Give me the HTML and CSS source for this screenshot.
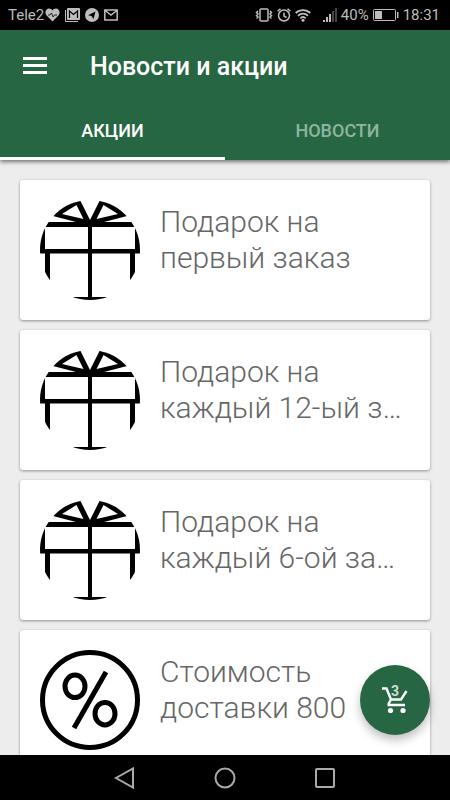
FILE: index.html
```html
<!DOCTYPE html>
<html lang="ru">
<head>
<meta charset="utf-8">
<meta name="viewport" content="width=device-width, initial-scale=1">
<title>Новости и акции</title>
<link rel="stylesheet" href="styles.css">
</head>
<body>
<svg class="defs" aria-hidden="true">
  <defs>
    <clipPath id="round"><circle cx="50" cy="50" r="50"/></clipPath>
    <symbol id="gift" viewBox="0 0 100 100">
      <g clip-path="url(#round)">
        <path fill-rule="evenodd" d="M40 0 50 20 60 0 80 0 87 16 64 22H100V53.500H95V100H90V53.500H52V97H100V100H0V97H48V53.500H10V100H5V53.500H0V22H36L13 16 20 0ZM36.500 5 22 14 43.500 19ZM63.500 5 56.500 19 78 14ZM5 27V49H48V27ZM52 27V49H95V27Z"/>
      </g>
    </symbol>
    <symbol id="percent" viewBox="0 0 100 100">
      <g fill="none" stroke="#000" stroke-width="5">
        <circle cx="50" cy="50" r="47.5"/>
        <ellipse cx="35" cy="36.3" rx="10" ry="11.3"/>
        <ellipse cx="65" cy="63.7" rx="10" ry="11.3"/>
        <path d="M66 22 34 78"/>
      </g>
    </symbol>
  </defs>
</svg>

<div class="status">
  <div class="status-group left">
    <span class="carrier">Tele2</span>
    <svg width="15" height="14" viewBox="0 0 15 14"><path fill="#bdbdbd" d="M7.500 13.500 1.600 7.400C-1 4.500 1 .5 4 .5c1.500 0 2.700.7 3.500 1.900C8.300 1.200 9.500.5 11 .5c3 0 5 4 2.400 6.900z"/><path fill="none" stroke="#000" stroke-width=".8" d="M3 7h2l1.500-2 1.500 4 1.500-2H12"/></svg>
    <svg width="15" height="14" viewBox="0 0 15 14"><path fill="none" stroke="#bdbdbd" d="M.5 2v11.500H13"/><rect x="2" width="13" height="12" rx="1" fill="#bdbdbd"/><path fill="none" stroke="#000" stroke-width="1.200" d="M4.500 10V3l4 3.500 4-3.500v7"/></svg>
    <svg width="14" height="14" viewBox="0 0 14 14"><circle cx="7" cy="7" r="7" fill="#bdbdbd"/><path d="M3 7.200 10.500 3.500 8.500 11 6.500 8z"/></svg>
    <svg width="14" height="12" viewBox="0 0 14 12"><path fill="none" stroke="#bdbdbd" stroke-width="1.500" d="M.8 1h12.400v10H.8zM1 1.500l6 4.500 6-4.500"/></svg>
  </div>
  <div class="status-group">
    <svg width="18" height="14" viewBox="0 0 18 14"><g fill="none" stroke="#bdbdbd" stroke-width="1.500"><rect x="5" y="1" width="8" height="12" rx="1"/><path d="M3 3 1.500 4.500 3 6 1.500 7.500 3 9 1.500 10.500M15 3l1.500 1.500L15 6l1.500 1.500L15 9l1.500 1.500"/></g></svg>
    <svg width="14" height="14" viewBox="0 0 14 14"><g fill="none" stroke="#bdbdbd" stroke-width="1.500"><circle cx="7" cy="7.500" r="5.500"/><path d="M7 4.500v3.500l2.500 1.500M.6 3.200 3.500.7M13.400 3.200 10.500.7"/></g></svg>
    <svg width="16" height="14" viewBox="0 0 16 14"><g fill="none" stroke="#bdbdbd" stroke-width="1.800"><path d="M.7 5a10.500 10.500 0 0 1 14.600 0M3 7.800a7 7 0 0 1 10 0M5.300 10.300a4 4 0 0 1 5.400 0"/></g><circle cx="8" cy="12.300" r="1.500" fill="#bdbdbd"/></svg>
    <svg class="signal" width="14" height="14" viewBox="0 0 14 14"><path fill="#bdbdbd" d="M0 12h2v2H0zM3 9h2v5H3zM6 6h2v8H6z"/><path fill="#444" d="M9 3h2v11H9zM12 0h2v14h-2z"/></svg>
    <span>40%</span>
    <svg width="26" height="12" viewBox="0 0 26 12"><rect x=".5" y=".5" width="22" height="11" rx="1" fill="none" stroke="#bdbdbd"/><path fill="#bdbdbd" d="M2 2h7v8H2zM24 3h1.500v6H24z"/></svg>
    <time>18:31</time>
  </div>
</div>

<header class="appbar">
  <div class="toolbar">
    <button class="menu" type="button" aria-label="Меню"><svg width="24" height="17" viewBox="0 0 24 17"><path fill="#fff" d="M0 0h24v3H0zM0 7h24v3H0zM0 14h24v3H0z"/></svg></button>
    <h1>Новости и акции</h1>
  </div>
  <nav class="tabs">
    <a class="tab active" href="#promo">АКЦИИ</a>
    <a class="tab" href="#news">НОВОСТИ</a>
  </nav>
</header>

<main class="content">
  <div class="list" id="promo">
    <article class="card"><svg class="pic"><use href="#gift"/></svg><h2>Подарок на<br>первый заказ</h2></article>
    <article class="card"><svg class="pic"><use href="#gift"/></svg><h2>Подарок на<br>каждый 12-ый з…</h2></article>
    <article class="card"><svg class="pic"><use href="#gift"/></svg><h2>Подарок на<br>каждый 6-ой за…</h2></article>
    <article class="card"><svg class="pic"><use href="#percent"/></svg><h2>Стоимость<br>доставки 800</h2></article>
  </div>
  <button class="fab" type="button" aria-label="Корзина">
    <svg width="28" height="28" viewBox="0 0 28 28"><g fill="none" stroke="#fff" stroke-width="2.400"><path d="M1 2.500h4.500L10 13.500h10L25.500 5M10 13.500l-2.300 4V19H24"/></g><circle cx="9.500" cy="24.500" r="2.600" fill="#fff"/><circle cx="22" cy="24.500" r="2.600" fill="#fff"/></svg>
    <span class="count">3</span>
  </button>
</main>

<footer class="sysnav">
  <button type="button" aria-label="Назад"><svg width="22" height="22" viewBox="0 0 22 22"><path d="M19 1.500v19L2 11z"/></svg></button>
  <button type="button" aria-label="Домой"><svg width="22" height="22" viewBox="0 0 22 22"><circle cx="11" cy="11" r="9.500"/></svg></button>
  <button type="button" aria-label="Недавние"><svg width="22" height="22" viewBox="0 0 22 22"><rect x="2" y="2" width="18" height="18" rx="1"/></svg></button>
</footer>
</body>
</html>
```
FILE: styles.css
```css
* { box-sizing: border-box; }

body {
  margin: 0;
  height: 100vh;
  display: flex;
  flex-direction: column;
  background: #ededed;
  font-family: Roboto, "Liberation Sans", sans-serif;
}

button {
  padding: 0;
  border: 0;
  background: none;
  font: inherit;
  cursor: pointer;
}

svg { display: block; flex: none; }

.defs { position: absolute; width: 0; height: 0; }

.status {
  flex: none;
  height: 30px;
  padding: 0 10px 0 8px;
  display: flex;
  align-items: center;
  justify-content: space-between;
  background: #000;
  color: #bdbdbd;
  font-size: 15px;
}

.status-group { display: flex; align-items: center; gap: 4px; }
.status-group.left { gap: 5px; }
.carrier { margin-right: -4px; }
.signal { margin-left: 8px; }

.appbar {
  flex: none;
  position: relative;
  z-index: 1;
  background: #266643;
  color: #fff;
  box-shadow: 0 2px 4px rgba(0, 0, 0, 0.5);
}

.toolbar {
  height: 70px;
  padding: 0 23px;
  display: flex;
  align-items: center;
  gap: 43px;
}

h1 { margin: 2px 0 0; font-size: 25px; font-weight: 500; }

.tabs { display: flex; height: 60px; }

.tab {
  flex: 1;
  display: flex;
  align-items: center;
  justify-content: center;
  border-top: 3px solid transparent;
  border-bottom: 3px solid transparent;
  color: #8fb5a0;
  font-size: 18px;
  font-weight: 500;
  text-decoration: none;
}

.tab.active { color: #fff; border-bottom-color: #fff; }

.content { flex: 1; min-height: 0; position: relative; }

.list {
  height: 100%;
  overflow: hidden;
  padding: 20px 20px 0;
  display: flex;
  flex-direction: column;
  gap: 10px;
}

.card {
  flex: none;
  min-height: 140px;
  padding: 20px;
  display: flex;
  gap: 20px;
  background: #fff;
  border-radius: 3px;
  box-shadow: 0 1px 3px rgba(0, 0, 0, 0.4);
}

.pic { width: 100px; height: 100px; }

h2 {
  margin: 4px 0 0;
  color: #666;
  font-size: 30px;
  font-weight: 300;
  line-height: 36px;
  white-space: nowrap;
}

.fab {
  position: absolute;
  right: 20px;
  bottom: 20px;
  width: 70px;
  height: 70px;
  display: grid;
  place-items: center;
  border-radius: 50%;
  background: #266643;
  box-shadow: 0 5px 10px rgba(0, 0, 0, 0.25);
}

.count {
  position: absolute;
  top: 18px;
  left: 0;
  width: 100%;
  color: #cfe0d6;
  font-size: 14px;
  font-weight: 700;
  line-height: 16px;
  text-align: center;
}

.sysnav {
  flex: none;
  height: 45px;
  padding: 0 75px;
  display: flex;
  background: #000;
}

.sysnav button { flex: 1; display: grid; place-items: center; }
.sysnav svg { fill: none; stroke: #aaa; stroke-width: 2; }
```
